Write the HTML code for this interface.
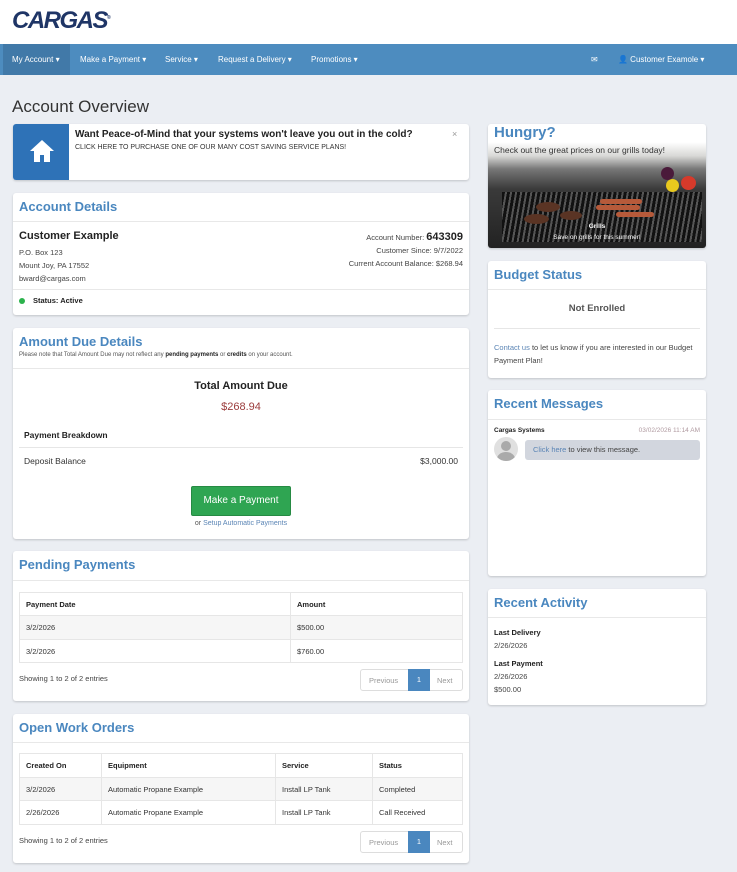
<!DOCTYPE html>
<html><head><meta charset="utf-8"><style>
*{box-sizing:border-box;margin:0;padding:0}
body{width:737px;height:872px;background:#ebeef3;font-family:"Liberation Sans",sans-serif;color:#333;position:relative;overflow:hidden;font-size:8px}
.a{position:absolute}
.p{position:absolute;background:#fff;border-radius:3px;box-shadow:0 1px 2px rgba(0,0,0,.18)}
.h{position:absolute;left:6px;color:#4a87bf;font-weight:bold;font-size:13px}
.ln{position:absolute;left:0;right:0;height:1px;background:#e8e8e8}
.nav span{position:absolute;top:11px;color:#fff;font-size:8px}
table{border-collapse:collapse;position:absolute;left:6px;font-size:7.5px}
td,th{border:1px solid #e6e6e6;text-align:left;padding:0 6px;font-weight:normal}
th{font-weight:bold;color:#222;background:#fff}
.pg{position:absolute;right:6px;width:103px;height:22px;border:1px solid #ddd;border-radius:3px;font-size:7.5px;color:#999}
.pg span{position:absolute;top:6px}
.pg b{position:absolute;left:47px;top:-1px;width:22px;height:22px;background:#4a87bf;color:#fff;text-align:center;line-height:22px;font-weight:normal}
</style></head><body>
<div class="a" style="left:0;top:0;width:737px;height:44px;background:#fff"></div>
<div class="a" style="left:12px;top:7px;font-size:24px;font-weight:900;font-style:italic;color:#1f3566;letter-spacing:-1.5px">CARGAS<sup style="font-size:5px">®</sup></div>
<div class="a nav" style="left:0;top:44px;width:737px;height:31px;background:#4d8cbf">
<div class="a" style="left:3px;top:0;width:67px;height:31px;background:#4179a8"></div>
<span style="left:12px">My Account ▾</span><span style="left:80px">Make a Payment ▾</span><span style="left:165px">Service ▾</span><span style="left:218px">Request a Delivery ▾</span><span style="left:311px">Promotions ▾</span>
<span style="left:591px">✉</span><span style="left:618px">👤 Customer Examole ▾</span></div>
<div class="a" style="left:12px;top:97px;font-size:17px;color:#333">Account Overview</div>

<div class="p" style="left:13px;top:124px;width:456px;height:56px">
<div class="a" style="left:0;top:0;width:56px;height:56px;background:#2e72b7;border-radius:3px 0 0 3px"></div>
<svg class="a" style="left:16px;top:14px" width="26" height="26" viewBox="0 0 26 26"><path d="M13 2L1 13h4v11h6v-7h4v7h6V13h4z" fill="#fff"/></svg>
<div class="a" style="left:62px;top:5px;font-size:10px;font-weight:bold;color:#222">Want Peace-of-Mind that your systems won't leave you out in the cold?</div>
<div class="a" style="left:62px;top:20px;font-size:7px;color:#333">CLICK HERE TO PURCHASE ONE OF OUR MANY COST SAVING SERVICE PLANS!</div>
<div class="a" style="left:439px;top:5px;color:#999;font-size:9px">×</div></div>

<div class="p" style="left:13px;top:193px;width:456px;height:122px">
<div class="h" style="top:6px">Account Details</div><div class="ln" style="top:28px"></div>
<div class="a" style="left:6px;top:37px;font-size:11px;font-weight:bold;color:#222">Customer Example</div>
<div class="a" style="left:6px;top:53px;line-height:13px;font-size:7.5px;color:#444">P.O. Box 123<br>Mount Joy, PA 17552<br>bward@cargas.com</div>
<div class="a" style="right:6px;top:38px;text-align:right;font-size:7.5px;color:#444;line-height:13px">Account Number: <b style="font-size:11px;color:#222">643309</b><br>Customer Since: 9/7/2022<br>Current Account Balance: $268.94</div>
<div class="ln" style="top:96px"></div>
<div class="a" style="left:6px;top:105px;width:6px;height:6px;border-radius:50%;background:#2bb24c"></div>
<div class="a" style="left:20px;top:103px;font-weight:bold;font-size:7.5px;color:#222">Status: Active</div></div>

<div class="p" style="left:13px;top:328px;width:456px;height:211px">
<div class="h" style="top:6px">Amount Due Details</div>
<div class="a" style="left:6px;top:24px;font-size:6px;color:#555">Please note that Total Amount Due may not reflect any <b style="color:#222">pending payments</b> or <b style="color:#222">credits</b> on your account.</div>
<div class="ln" style="top:40px"></div>
<div class="a" style="left:0;width:456px;top:52px;text-align:center;font-size:11px;font-weight:bold;color:#222">Total Amount Due</div>
<div class="a" style="left:0;width:456px;top:73px;text-align:center;font-size:11px;color:#9b3c3c">$268.94</div>
<div class="a" style="left:11px;top:102px;font-size:8.5px;font-weight:bold;color:#222">Payment Breakdown</div>
<div class="a" style="left:6px;right:6px;top:119px;height:1px;background:#e6e6e6"></div>
<div class="a" style="left:11px;top:128px;font-size:8.5px;color:#333">Deposit Balance</div>
<div class="a" style="right:11px;top:128px;font-size:8.5px;color:#333">$3,000.00</div>
<div class="a" style="left:178px;top:158px;width:100px;height:30px;background:#2fa552;border:1px solid #268a43;border-radius:2px;color:#fff;text-align:center;line-height:28px;font-size:10px">Make a Payment</div>
<div class="a" style="left:0;width:456px;top:192px;text-align:center;font-size:7px;color:#555">or <span style="color:#5b85b5">Setup Automatic Payments</span></div></div>

<div class="p" style="left:13px;top:551px;width:456px;height:150px">
<div class="h" style="top:6px">Pending Payments</div><div class="ln" style="top:29px"></div>
<table style="top:41px;width:444px"><tr style="height:23px"><th style="width:271px">Payment Date</th><th>Amount</th></tr>
<tr style="height:24px;background:#f6f6f6"><td>3/2/2026</td><td>$500.00</td></tr><tr style="height:23px"><td>3/2/2026</td><td>$760.00</td></tr></table>
<div class="a" style="left:6px;top:123px;font-size:7.5px;color:#444">Showing 1 to 2 of 2 entries</div>
<div class="pg" style="top:118px"><span style="left:8px">Previous</span><b>1</b><span style="left:76px">Next</span></div></div>

<div class="p" style="left:13px;top:714px;width:456px;height:149px">
<div class="h" style="top:6px">Open Work Orders</div><div class="ln" style="top:28px"></div>
<table style="top:39px;width:444px"><tr style="height:24px"><th style="width:82px">Created On</th><th style="width:174px">Equipment</th><th style="width:97px">Service</th><th>Status</th></tr>
<tr style="height:23px;background:#f6f6f6"><td>3/2/2026</td><td>Automatic Propane Example</td><td>Install LP Tank</td><td>Completed</td></tr>
<tr style="height:24px"><td>2/26/2026</td><td>Automatic Propane Example</td><td>Install LP Tank</td><td>Call Received</td></tr></table>
<div class="a" style="left:6px;top:122px;font-size:7.5px;color:#444">Showing 1 to 2 of 2 entries</div>
<div class="pg" style="top:117px"><span style="left:8px">Previous</span><b>1</b><span style="left:76px">Next</span></div></div>

<div class="p" style="left:488px;top:124px;width:218px;height:124px;overflow:hidden;background:linear-gradient(#fff 0,#fff 18px,#d8d8d6 32px,#777 45px,#3a3a3a 65px,#222 124px)">
<div class="a" style="left:6px;top:0;font-size:15px;font-weight:bold;color:#4a87bf">Hungry?</div>
<div class="a" style="left:6px;top:21px;font-size:8.5px;color:#333">Check out the great prices on our grills today!</div>
<div class="a" style="left:14px;top:68px;width:200px;height:50px;background:repeating-linear-gradient(100deg,#111 0 3px,#555 3px 5px)"></div>
<div class="a" style="left:48px;top:78px;width:24px;height:10px;border-radius:50%;background:#5a3424"></div>
<div class="a" style="left:72px;top:87px;width:22px;height:9px;border-radius:50%;background:#5a3424"></div>
<div class="a" style="left:36px;top:90px;width:25px;height:10px;border-radius:50%;background:#5a3424"></div>
<div class="a" style="left:112px;top:75px;width:42px;height:5px;border-radius:3px;background:#b65a3a"></div>
<div class="a" style="left:108px;top:81px;width:44px;height:5px;border-radius:3px;background:#b65a3a"></div>
<div class="a" style="left:128px;top:88px;width:38px;height:5px;border-radius:3px;background:#b65a3a"></div>
<div class="a" style="left:178px;top:55px;width:13px;height:13px;border-radius:50%;background:#e8c91e"></div>
<div class="a" style="left:193px;top:52px;width:15px;height:14px;border-radius:50%;background:#d63a2b"></div>
<div class="a" style="left:173px;top:43px;width:13px;height:13px;border-radius:50%;background:#4a1a3a"></div>
<div class="a" style="left:0;width:218px;top:99px;text-align:center;font-size:6.5px;color:#fff;font-weight:bold">Grills</div>
<div class="a" style="left:0;width:218px;top:110px;text-align:center;font-size:6.5px;color:#fff">Save on grills for this summer!</div></div>

<div class="p" style="left:488px;top:261px;width:218px;height:117px">
<div class="h" style="top:6px">Budget Status</div><div class="ln" style="top:28px"></div>
<div class="a" style="left:0;width:218px;top:42px;text-align:center;font-size:9.5px;font-weight:bold;color:#555">Not Enrolled</div>
<div class="a" style="left:6px;right:6px;top:67px;height:1px;background:#e6e6e6"></div>
<div class="a" style="left:6px;top:80px;width:205px;font-size:7.5px;line-height:13px;color:#444"><span style="color:#5b85b5">Contact us</span> to let us know if you are interested in our Budget Payment Plan!</div></div>

<div class="p" style="left:488px;top:390px;width:218px;height:186px">
<div class="h" style="top:6px">Recent Messages</div><div class="ln" style="top:29px"></div>
<div class="a" style="left:6px;top:37px;font-size:6.5px;font-weight:bold;color:#222">Cargas Systems</div>
<div class="a" style="right:6px;top:37px;font-size:6.5px;color:#b09aa0">03/02/2026 11:14 AM</div>
<div class="a" style="left:6px;top:47px;width:24px;height:24px;border-radius:50%;background:#e0e0e0;overflow:hidden"><div class="a" style="left:7px;top:4px;width:10px;height:10px;border-radius:50%;background:#aaa"></div><div class="a" style="left:3px;top:15px;width:18px;height:14px;border-radius:50%;background:#aaa"></div></div>
<div class="a" style="left:37px;top:50px;width:175px;height:20px;background:#d2d6de;border-radius:3px;font-size:7.5px;line-height:20px;padding-left:8px;color:#444"><span style="color:#5b85b5">Click here</span> to view this message.</div></div>

<div class="p" style="left:488px;top:589px;width:218px;height:116px">
<div class="h" style="top:6px">Recent Activity</div><div class="ln" style="top:28px"></div>
<div class="a" style="left:6px;top:37px;font-size:7.5px;line-height:13px;color:#444"><b style="color:#222">Last Delivery</b><br>2/26/2026</div>
<div class="a" style="left:6px;top:68px;font-size:7.5px;line-height:13px;color:#444"><b style="color:#222">Last Payment</b><br>2/26/2026<br>$500.00</div></div>
</body></html>
